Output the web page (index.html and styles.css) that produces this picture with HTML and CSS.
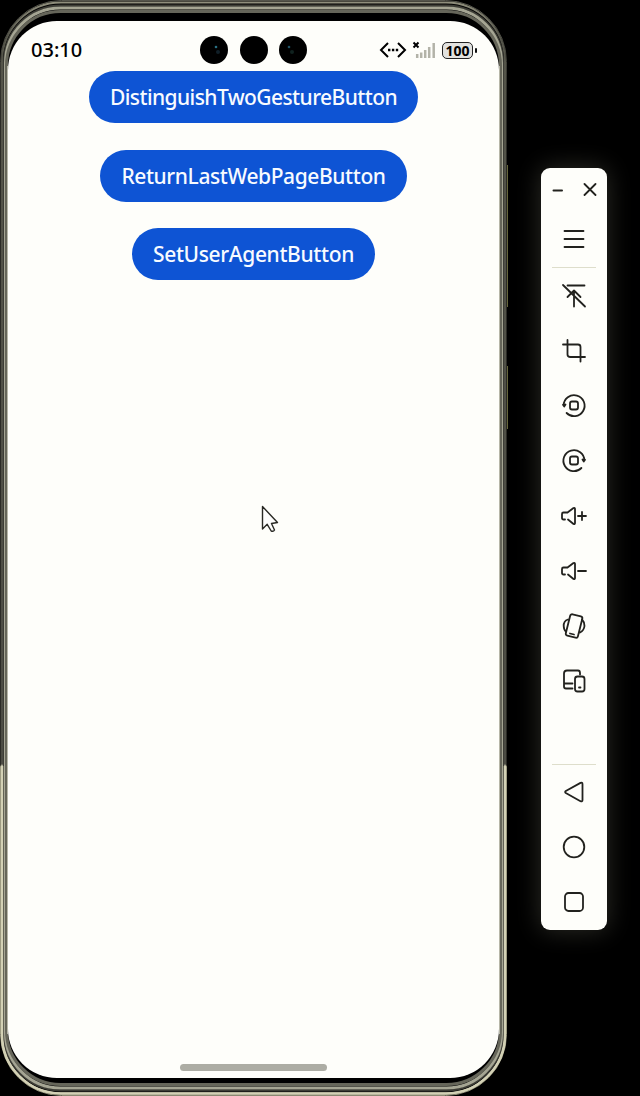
FILE: index.html
```html
<!DOCTYPE html>
<html lang="en">
<head>
<meta charset="utf-8">
<title>Phone emulator</title>
<link rel="stylesheet" href="styles.css">
</head>
<body>
<div class="desktop">
  <main class="phone">
    <svg class="frame" width="510" height="1096" viewBox="0 0 510 1096" fill="none">
      <defs>
        <linearGradient id="edge" x1="0" y1="0" x2="0" y2="1">
          <stop offset="0" stop-color="#55554c"/><stop offset=".1" stop-color="#2b2b26"/>
          <stop offset=".698" stop-color="#2b2b26"/><stop offset=".7" stop-color="#8b8972"/>
          <stop offset="1" stop-color="#8b8972"/>
        </linearGradient>
        <linearGradient id="rim" x1="0" y1="0" x2="0" y2="1">
          <stop offset="0" stop-color="#8f8e7c"/><stop offset=".03" stop-color="#55554a"/>
          <stop offset=".698" stop-color="#4c4c44"/><stop offset=".7" stop-color="#d5d3b8"/>
          <stop offset="1" stop-color="#cfcdb2"/>
        </linearGradient>
      </defs>
      <path d="M507.500 165V307M507.500 366V429" stroke="#66663c"/>
      <rect x=".5" y=".5" width="506" height="1095" rx="61" fill="#000" stroke="url(#edge)"/>
      <rect x="2" y="2.500" width="503" height="1091" rx="59" stroke="url(#rim)" stroke-width="2"/>
      <rect x="4" y="5.500" width="499" height="1085" rx="57" stroke="#3d3d36" stroke-width="2"/>
      <rect x="5.500" y="8" width="496" height="1080" rx="55" stroke="#a5a593" stroke-width="3"/>
      <rect x="6.500" y="11.500" width="494" height="1073" rx="54" stroke="#66665a" stroke-width="3"/>
      <path d="M7.500 66V1034M499.500 66V1034" stroke="#b7b7a8"/>
      <path d="M2 766V1034.500A59 59 0 0 0 61 1093.500H446A59 59 0 0 0 505 1034.500V766" stroke="#d3d1b5" stroke-width="2.500"/>
    </svg>
    <div class="screen">
      <header class="status">
        <time class="clock">03:10</time>
        <div class="cameras">
          <svg width="28" height="28" viewBox="0 0 28 28"><circle cx="14" cy="14" r="14"/><circle cx="16" cy="11" r="1.300" fill="#287184"/><circle cx="18" cy="16" r="2" fill="#101f28"/></svg>
          <svg width="28" height="28" viewBox="0 0 28 28"><circle cx="14" cy="14" r="14"/></svg>
          <svg width="28" height="28" viewBox="0 0 28 28"><circle cx="14" cy="14" r="14"/><circle cx="10" cy="11" r="1.300" fill="#1f5265"/><circle cx="13" cy="16" r="2" fill="#10221f"/></svg>
        </div>
        <div class="indicators">
          <svg width="28" height="18" viewBox="0 0 28 18" fill="none" stroke="#000" stroke-width="2"><path d="M9 2L2 9L9 16M19 2L26 9L19 16"/><path d="M9 9H19.500" stroke-width="2.400" stroke-dasharray="2.400 1.500"/></svg>
          <svg class="signal" width="24" height="18" viewBox="0 0 24 18" fill="none"><path d="M1.500 1.500L6.500 6.500M6.500 1.500L1.500 6.500" stroke="#000" stroke-width="2"/><path d="M5.200 17V13M9.200 17V11.500M13.200 17V9M17.200 17V6M21.700 17V2" stroke="#b3b3a8" stroke-width="2.500"/></svg>
          <span class="battery">100</span>
        </div>
      </header>
      <nav class="actions">
        <button class="action first"><span>DistinguishTwoGestureButton</span></button>
        <button class="action second"><span>ReturnLastWebPageButton</span></button>
        <button class="action third"><span>SetUserAgentButton</span></button>
      </nav>
      <div class="home-bar"></div>
    </div>
    <svg class="pointer" width="18" height="28" viewBox="0 0 18 28"><path d="M1.500 1.500V24L6.200 19.300L10.200 26Q12.500 27 13.500 25L10.500 18.500L16.500 17.500Z" fill="#fdfdfc" stroke="#292924" stroke-width="1.400" stroke-linejoin="round"/></svg>
  </main>

  <aside class="toolbar">
    <div class="window-buttons">
      <svg width="12" height="14" viewBox="0 0 12 14"><path d="M1.500 7.500H10" stroke-width="2"/></svg>
      <svg width="14" height="14" viewBox="0 0 14 14"><path d="M1.500 1L12.500 12M12.500 1L1.500 12"/></svg>
    </div>
    <svg class="tool menu" viewBox="0 0 28 28"><path d="M4.500 6H23.500M4.500 14H23.500M4.500 22H23.500"/></svg>
    <hr>
    <div class="tools">
      <svg class="tool" viewBox="0 0 28 28"><path d="M7.500 3.500H24.500M3 3L25 24.500M14 9V24.500M7.500 15L14 8.500L20.500 15"/></svg>
      <svg class="tool" viewBox="0 0 28 28"><path d="M3 7.500H18Q20.500 7.500 20.500 10V24.500M7.500 3V17.500Q7.500 20 10.500 20H25"/></svg>
      <svg class="tool" viewBox="0 0 28 28"><path d="M3.600 13.500A10.500 10.500 0 1 1 6.600 21M3 12.800L4.200 14.500L5.500 12.500"/><rect x="10" y="9.500" width="8" height="8" rx="2"/></svg>
      <svg class="tool" viewBox="0 0 28 28"><path d="M24.400 13.500A10.500 10.500 0 1 0 21.400 21M22.500 12.500L23.800 14.500L25 12.800"/><rect x="10" y="9.500" width="8" height="8" rx="2"/></svg>
      <svg class="tool" viewBox="0 0 28 28"><path d="M5 17.500H3.500Q2 17.500 2 16V12Q2 10.500 3.500 10.500H7.500L13.500 6Q15 5.500 15 7V21Q15 22.500 13.500 22L8 17.500M18 14H26M22 10V18"/></svg>
      <svg class="tool" viewBox="0 0 28 28"><path d="M5 17.500H3.500Q2 17.500 2 16V12Q2 10.500 3.500 10.500H7.500L13.500 6Q15 5.500 15 7V21Q15 22.500 13.500 22L8 17.500M18 14H26"/></svg>
      <svg class="tool" viewBox="0 0 28 28"><rect x="7.800" y="3" width="12.500" height="22" rx="2" transform="rotate(14 14 14)"/><path d="M10 21.500L14 22.500M8 7.500Q3.500 9 3.700 14Q3.800 18 6 19.500M22 7.500Q24.500 10 24.500 14Q24 18.500 20 20.500"/></svg>
      <svg class="tool" viewBox="0 0 28 28"><path d="M20 7.500V6Q20 3.500 18 3.500H7Q4 3.500 4 6.500V19.500Q4 21.500 6 21.500H12.500M4 16.500H12.500"/><rect x="15" y="9.500" width="9.500" height="15" rx="2.500"/><path d="M19 20.500H20.500"/></svg>
    </div>
    <hr class="lower">
    <div class="tools">
      <svg class="tool" viewBox="0 0 28 28"><path d="M20.500 4.900L5.800 13Q4.500 14 5.800 15L20.500 23.200Q22.500 24 22.500 22V6.200Q22.500 4.200 20.500 4.900Z"/></svg>
      <svg class="tool" viewBox="0 0 28 28"><circle cx="14" cy="14" r="10.300"/></svg>
      <svg class="tool" viewBox="0 0 28 28"><rect x="5" y="5" width="18" height="18" rx="3.500"/></svg>
    </div>
  </aside>
</div>
</body>
</html>
```
FILE: styles.css
```css
* { box-sizing: border-box; }
body { margin: 0; background: #000; font-family: "Noto Sans", sans-serif; }
svg { display: block; flex: none; }
.desktop { width: 640px; height: 1096px; display: flex; align-items: flex-start; overflow: hidden; }
.phone { position: relative; width: 507px; height: 1096px; padding: 21px 8px 18px; flex: none; }
.frame { position: absolute; left: 0; top: 0; }
.screen { position: relative; width: 491px; height: 1057px; border-radius: 49px; background: #fefefa; display: flex; flex-direction: column; align-items: center; }
.status { width: 100%; height: 50px; padding: 8px 23px 0; display: grid; grid-template-columns: 169px 107px 1fr; align-items: center; }
.clock { font-size: 20px; font-weight: 500; line-height: 28px; color: #000; white-space: nowrap; }
.cameras { display: flex; justify-content: space-between; }
.indicators { display: flex; align-items: center; padding-left: 72px; }
.signal { margin-left: 5px; }
.battery { position: relative; flex: none; margin-left: 6px; width: 31px; height: 17px; border: 1.500px solid #222; border-radius: 5px; background: #e2e2df; font: 700 14px/15px "Noto Sans", sans-serif; text-align: center; color: #000; }
.battery::after { content: ""; position: absolute; right: -5px; top: 5px; width: 2px; height: 5px; border-radius: 1px; background: #111; }
.actions { display: flex; flex-direction: column; align-items: center; gap: 26.500px; }
.action { height: 52px; padding: 0; border: 0; border-radius: 26px; background: #0e54d4; color: #f8fbff; font: 500 21px/52px "Noto Sans", sans-serif; white-space: nowrap; }
.first { width: 329px; letter-spacing: -0.580px; }
.second { width: 307px; letter-spacing: -0.400px; }
.third { width: 243px; letter-spacing: -0.350px; }
.home-bar { width: 147px; height: 7px; margin: auto 0 7px; border-radius: 4px; background: #adada4; }
.pointer { position: absolute; left: 261px; top: 505px; }
.toolbar { width: 66px; height: 762px; margin: 168px 0 0 34px; border-radius: 9px; background: #fefefa; box-shadow: 0 0 24px 1px #2a2a24; display: flex; flex-direction: column; align-items: center; flex: none; }
.toolbar svg { fill: none; stroke: #22221e; stroke-width: 1.800; stroke-linecap: round; stroke-linejoin: round; }
.window-buttons { width: 100%; height: 43px; padding: 0 10px 0 11px; display: flex; align-items: center; justify-content: space-between; }
.tool { width: 28px; height: 28px; }
.menu { margin-top: 14px; }
.toolbar hr { width: 44px; height: 1px; margin: 14px 0 14px; border: 0; background: #dedecb; }
.tools { display: flex; flex-direction: column; gap: 27px; }
.toolbar hr.lower { margin: 69px 0 13px; }
```
